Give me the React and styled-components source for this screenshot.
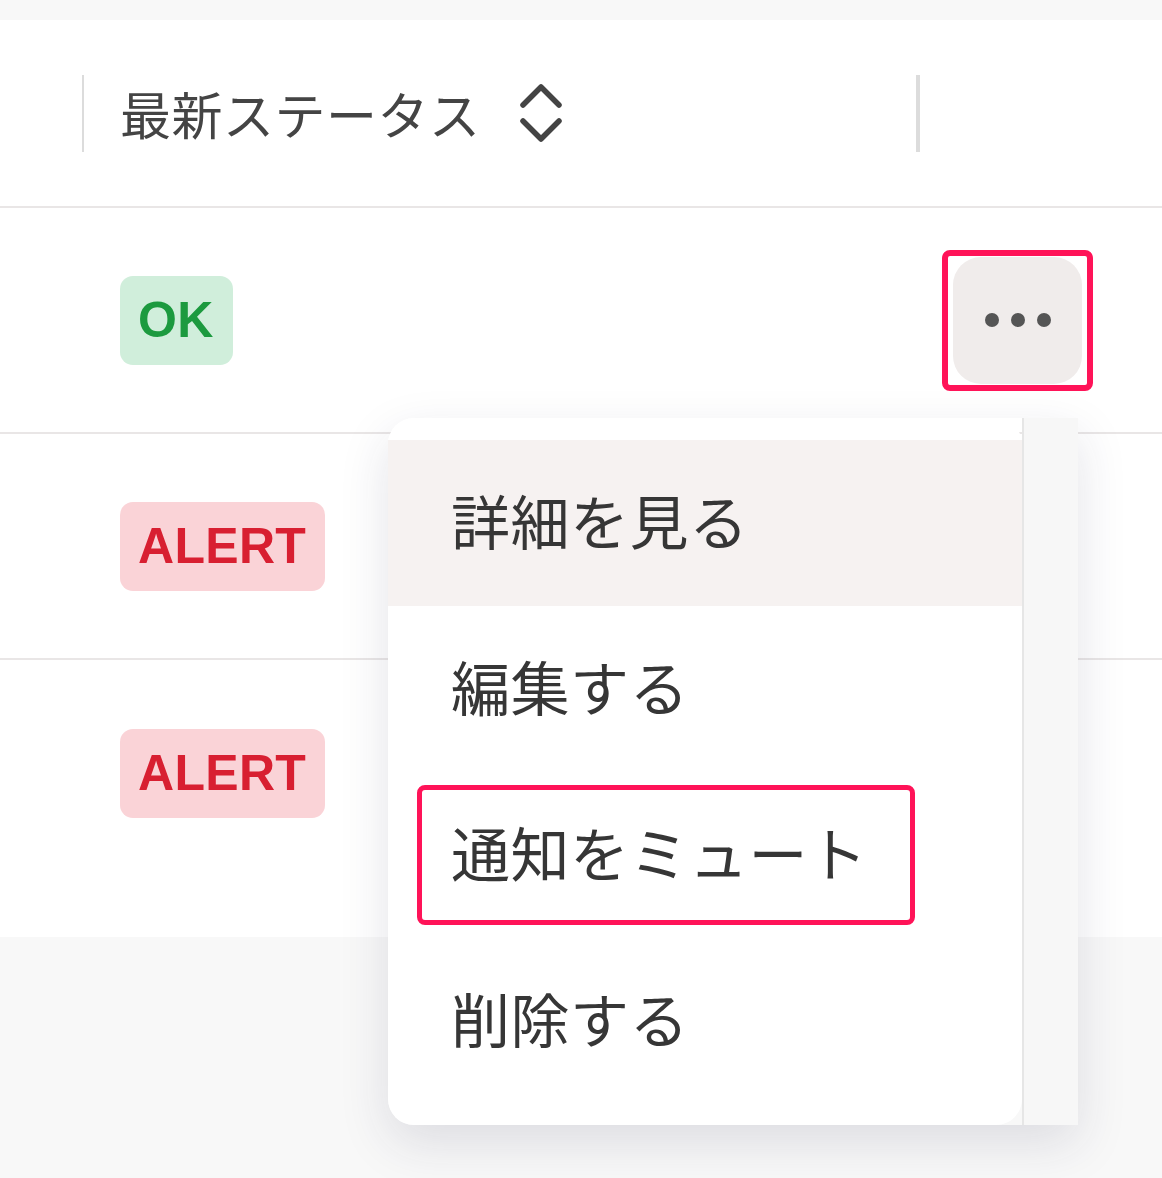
import React from 'react';
import styled, { createGlobalStyle } from 'styled-components';

const GlobalStyle = createGlobalStyle`
  html, body {
    margin: 0;
    padding: 0;
    background: #f8f8f8;
  }
  body {
    font-family: 'Noto Sans CJK JP', 'Noto Sans', sans-serif;
    color: #3a3a3a;
  }
`;

const Page = styled.div`
  width: 1162px;
  min-height: 1178px;
  padding-top: 20px;
  background: #f8f8f8;
  position: relative;
`;

const Table = styled.div`
  position: relative;
  background: #fff;
  padding-bottom: 51px;
`;

const Row = styled.div`
  display: grid;
  grid-template-columns: 82px 834px 1fr;
  align-items: center;
  box-sizing: border-box;
  height: ${(p) => p.$height}px;
  border-bottom: ${(p) => (p.$last ? 'none' : '2px solid #e9e6e6')};
`;

const HeadCell = styled.div`
  position: relative;
  display: flex;
  align-items: center;
  gap: 38px;
  height: 100%;
  padding-left: 38px;
  font-size: 51px;
  color: #444;
  letter-spacing: 0.5px;

  &::before {
    content: '';
    position: absolute;
    left: 0;
    top: 55px;
    width: ${(p) => p.$divider}px;
    height: 77px;
    background: #dcdcdc;
  }
`;

const StatusCell = styled.div`
  padding-left: 38px;
`;

const ActionCell = styled.div`
  padding-left: 26px;
`;

const Badge = styled.span`
  display: inline-flex;
  align-items: center;
  height: 89px;
  padding: 0 19px 0 18px;
  border-radius: 13px;
  font-family: 'Liberation Sans', Arial, sans-serif;
  font-weight: 700;
  font-size: 50px;
  letter-spacing: 0.3px;
  color: ${(p) => (p.$tone === 'ok' ? '#1c9a3f' : '#d81f31')};
  background: ${(p) => (p.$tone === 'ok' ? '#d0eedb' : '#fad3d7')};
`;

const Highlight = styled.span`
  display: inline-flex;
  padding: 1px 5px;
  border: 6px solid #ff1358;
  border-radius: 8px;
`;

const MoreButton = styled.button`
  width: 129px;
  height: 127px;
  border: none;
  border-radius: 28px;
  background: #f0eceb;
  display: flex;
  align-items: center;
  justify-content: center;
  gap: 12px;
  padding: 0;
  cursor: pointer;
`;

const Dot = styled.span`
  width: 14px;
  height: 14px;
  border-radius: 50%;
  background: #555;
`;

const MenuWrap = styled.div`
  position: absolute;
  left: 388px;
  top: 398px;
  display: flex;
  height: 707px;
  box-shadow: 0 18px 50px rgba(40, 40, 80, 0.13);
  border-radius: 26px 0 0 26px;
`;

const Menu = styled.div`
  width: 634px;
  padding: 22px 0 21px;
  background: #fff;
  border-radius: 26px;
  box-sizing: border-box;
`;

const Track = styled.div`
  width: 54px;
  background: #f7f7f7;
  border-left: 2px solid #e6e6e6;
`;

const Item = styled.div`
  display: flex;
  align-items: center;
  height: 166px;
  padding-left: 29px;
  box-sizing: border-box;
  background: ${(p) => (p.$active ? '#f6f2f1' : 'transparent')};
`;

const ItemLabel = styled.span`
  display: inline-flex;
  align-items: center;
  height: 140px;
  box-sizing: border-box;
  padding: 0 42px 8px 29px;
  border: 5px solid ${(p) => (p.$marked ? '#ff1358' : 'transparent')};
  border-radius: 8px;
  font-size: 59px;
  color: #363636;
  letter-spacing: 0.5px;
`;

const SortIcon = () => (
  <svg width="44" height="64" viewBox="0 0 44 64" fill="none">
    <path d="M4 24 L22 6 L40 24" stroke="#444" strokeWidth="5.5" strokeLinecap="round" strokeLinejoin="round" />
    <path d="M4 40 L22 58 L40 40" stroke="#444" strokeWidth="5.5" strokeLinecap="round" strokeLinejoin="round" />
  </svg>
);

const rows = [
  { status: 'ok', label: 'OK' },
  { status: 'alert', label: 'ALERT' },
  { status: 'alert', label: 'ALERT' },
];

const menuItems = ['詳細を見る', '編集する', '通知をミュート', '削除する'];

const App = () => {
  return (
    <Page>
      <GlobalStyle />
      <Table>
        <Row $height={188}>
          <div />
          <HeadCell $divider={2}>
            最新ステータス
            <SortIcon />
          </HeadCell>
          <HeadCell $divider={4} />
        </Row>
        {rows.map((r, i) => (
          <Row key={i} $height={226} $last={i === rows.length - 1}>
            <div />
            <StatusCell>
              <Badge $tone={r.status}>{r.label}</Badge>
            </StatusCell>
            <ActionCell>
              {i === 0 && (
                <Highlight>
                  <MoreButton aria-label="more">
                    <Dot />
                    <Dot />
                    <Dot />
                  </MoreButton>
                </Highlight>
              )}
            </ActionCell>
          </Row>
        ))}

        <MenuWrap>
          <Menu>
            {menuItems.map((m, i) => (
              <Item key={m} $active={i === 0}>
                <ItemLabel $marked={i === 2}>{m}</ItemLabel>
              </Item>
            ))}
          </Menu>
          <Track />
        </MenuWrap>
      </Table>
    </Page>
  );
};

export default App;
